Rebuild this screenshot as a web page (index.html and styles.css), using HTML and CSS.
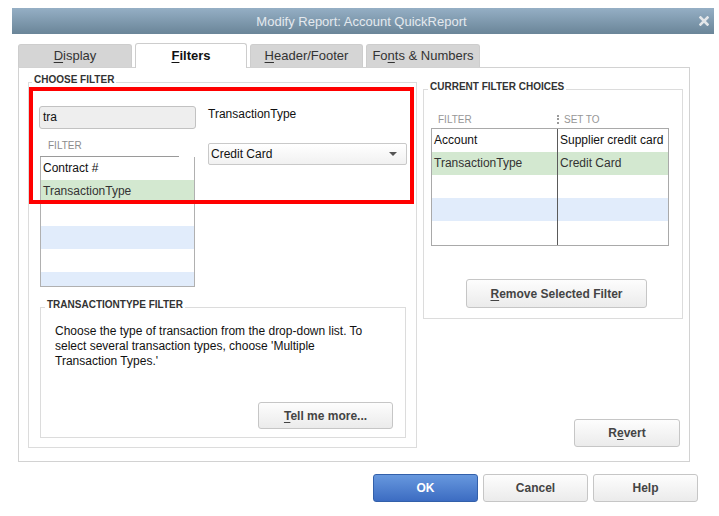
FILE: index.html
```html
<!DOCTYPE html>
<html lang="en">

<head>
  <meta charset="UTF-8" />
  <meta name="viewport" content="width=device-width, initial-scale=1.0" />
  <title>Modify Report: Account QuickReport</title>
  <link rel="stylesheet" href="styles.css">
</head>

<body>
  <div class="titlebar">
    <span class="title">Modify Report: Account QuickReport</span>
    <svg class="close" width="10" height="10" viewBox="0 0 10 10">
      <path d="M1.5 1.5 L8.5 8.5 M8.5 1.5 L1.5 8.5" stroke="#e3e6e9" stroke-width="2.6" stroke-linecap="square" />
    </svg>
  </div>

  <div class="tabs">
    <div class="tab tab-display"><u>D</u>isplay</div>
    <div class="tab tab-filters active"><u>F</u>ilters</div>
    <div class="tab tab-header"><u>H</u>eader/Footer</div>
    <div class="tab tab-fonts">Fo<u>n</u>ts &amp; Numbers</div>
  </div>

  <div class="panel">
    <div class="group choose">
      <div class="group-title">Choose Filter</div>
      <div class="choose-row">
        <div class="choose-left">
          <div class="search">tra</div>
          <div class="list-head">FILTER</div>
          <div class="list">
            <div class="row">Contract #</div>
            <div class="row picked">TransactionType</div>
            <div class="row"></div>
            <div class="row alt"></div>
            <div class="row"></div>
            <div class="row alt"></div>
          </div>
        </div>
        <div class="choose-right">
          <div class="field-label">TransactionType</div>
          <div class="select">
            <span>Credit Card</span>
            <span class="caret"></span>
          </div>
        </div>
      </div>
      <div class="group help-box">
        <div class="group-title">TransactionType Filter</div>
        <p>Choose the type of transaction from the drop-down list. To<br>
          select several transaction types, choose 'Multiple<br>
          Transaction Types.'</p>
        <button class="btn tell"><u>T</u>ell me more...</button>
      </div>
    </div>

    <div class="side">
      <div class="group current">
        <div class="group-title">Current Filter Choices</div>
        <div class="cf-head">
          <div class="cf-head-name">FILTER</div>
          <span class="cf-sep"></span>
          <div class="cf-head-value">SET TO</div>
        </div>
        <div class="cf-table">
          <div class="cf-row">
            <div class="cf-cell name">Account</div>
            <div class="cf-cell">Supplier credit card</div>
          </div>
          <div class="cf-row picked">
            <div class="cf-cell name">TransactionType</div>
            <div class="cf-cell">Credit Card</div>
          </div>
          <div class="cf-row">
            <div class="cf-cell name"></div>
            <div class="cf-cell"></div>
          </div>
          <div class="cf-row alt">
            <div class="cf-cell name"></div>
            <div class="cf-cell"></div>
          </div>
          <div class="cf-row last">
            <div class="cf-cell name"></div>
            <div class="cf-cell"></div>
          </div>
        </div>
        <button class="btn remove"><u>R</u>emove Selected Filter</button>
      </div>
      <button class="btn revert">R<u>e</u>vert</button>
    </div>
  </div>

  <div class="footer">
    <button class="btn primary">OK</button>
    <button class="btn">Cancel</button>
    <button class="btn">Help</button>
  </div>

  <!-- annotation drawn over the dialog -->
  <div class="highlight"></div>
</body>

</html>
```

FILE: styles.css
```css
* {
  box-sizing: border-box;
}

body {
  margin: 0;
  background: #fff;
  font-family: "Liberation Sans", Arial, sans-serif;
  font-size: 12px;
  color: #111;
}

u {
  text-decoration-thickness: 1px;
  text-underline-offset: 2px;
}

/* title bar */
.titlebar {
  margin: 8px 5px 0 12px;
  height: 26px;
  background: linear-gradient(to bottom, #95afc5, #6a8598);
  display: flex;
  align-items: center;
}

.title {
  flex: 1;
  text-align: center;
  padding-left: 12px;
  font-size: 13px;
  color: #e4e9ee;
}

.close {
  margin-right: 5px;
}

/* tabs */
.tabs {
  margin: 9px 0 -1px 18px;
  display: flex;
  align-items: flex-end;
  gap: 3px;
  position: relative;
  z-index: 1;
}

.tab {
  width: 113px;
  height: 23px;
  margin-bottom: 1px;
  background: #d5d5d5;
  border: 1px solid #cdcdcd;
  border-bottom: none;
  border-radius: 3px 3px 0 0;
  text-align: center;
  line-height: 22px;
  font-size: 13px;
  color: #333;
}

.tab-display,
.tab-fonts {
  width: 114px;
}

.tab-filters {
  width: 112px;
}

.tab.active {
  height: 25px;
  margin-bottom: 0;
  background: #fff;
  font-weight: bold;
  color: #111;
  line-height: 24px;
}

/* main panel */
.panel {
  margin-left: 18px;
  width: 672px;
  height: 395px;
  border: 1px solid #d2d2d2;
  padding: 14px 0 0 9px;
  display: flex;
  align-items: flex-start;
  gap: 6px;
}

.group {
  border: 1px solid #dcdcdc;
}

.group-title {
  width: fit-content;
  margin: -9px 0 0 3px;
  padding: 0 2px;
  background: #fff;
  font-size: 10px;
  line-height: 12px;
  font-weight: bold;
  text-transform: uppercase;
  color: #333;
}

.choose {
  width: 389px;
  height: 366px;
  padding-left: 10px;
}

.choose > .group-title {
  margin-left: -7px;
}

.choose-row {
  margin-top: 20px;
  display: flex;
  gap: 12px;
}

.choose-left {
  width: 157px;
}

.search {
  height: 23px;
  border: 1px solid #c2c2c2;
  border-radius: 3px;
  background: #eee;
  padding-left: 3px;
  line-height: 21px;
}

.list-head {
  margin-left: 1px;
  width: 139px;
  height: 28px;
  padding: 0 0 4px 8px;
  border-bottom: 1px solid #9a9a9a;
  display: flex;
  align-items: flex-end;
  font-size: 10px;
  line-height: 12px;
  color: #8c8c8c;
}

.list {
  margin-left: 1px;
  width: 155px;
  height: 130px;
  border: 1px solid #b0b0b0;
  border-top: none;
  overflow: hidden;
}

.row {
  height: 23px;
  line-height: 23px;
  padding-left: 2px;
  white-space: nowrap;
}

.picked {
  background: #d3e8d0;
  color: #333;
}

.alt {
  background: #e1ecfb;
}

.choose-right {
  width: 199px;
}

.field-label {
  margin-top: 1px;
  line-height: 14px;
}

.select {
  margin-top: 22px;
  height: 22px;
  border: 1px solid #c9c9c9;
  border-radius: 2px;
  background: linear-gradient(to bottom, #fff, #f1f1f1);
  padding: 0 9px 0 2px;
  display: flex;
  align-items: center;
  justify-content: space-between;
}

.caret {
  width: 0;
  height: 0;
  border-left: 4px solid transparent;
  border-right: 4px solid transparent;
  border-top: 4px solid #555;
}

.help-box {
  margin: 20px 0 0 1px;
  width: 366px;
  height: 131px;
  display: flex;
  flex-direction: column;
}

.help-box .group-title {
  margin-left: 4px;
}

.help-box p {
  margin: 13px 0 0;
  padding-left: 14px;
  line-height: 15px;
}

/* buttons */
.btn {
  height: 28px;
  border: 1px solid #c6c6c6;
  border-radius: 3px;
  background: linear-gradient(to bottom, #fdfdfd, #ebebeb);
  font-family: "Liberation Sans", Arial, sans-serif;
  font-size: 12px;
  font-weight: bold;
  color: #444;
  padding: 0;
}

.tell {
  margin: auto 12px 8px 0;
  align-self: flex-end;
  width: 135px;
  height: 27px;
}

/* right column */
.side {
  margin-top: 7px;
  display: flex;
  flex-direction: column;
}

.current {
  width: 260px;
  height: 230px;
  padding-left: 7px;
}

.current .group-title {
  margin-left: -3px;
}

.cf-head {
  margin-top: 17px;
  height: 18px;
  display: flex;
  align-items: center;
  font-size: 10px;
  color: #979797;
}

.cf-head-name {
  width: 126px;
  padding-left: 7px;
}

.cf-sep {
  height: 9px;
  border-left: 2px dotted #9a9a9a;
}

.cf-head-value {
  padding-left: 5px;
}

.cf-table {
  width: 238px;
  height: 118px;
  border: 1px solid #a9a9a9;
  display: flex;
  flex-direction: column;
}

.cf-row {
  height: 23px;
  display: flex;
  line-height: 23px;
}

.cf-row.last {
  flex: 1;
}

.cf-cell {
  flex: 1;
  padding-left: 2px;
  white-space: nowrap;
  overflow: hidden;
}

.cf-cell.name {
  flex: none;
  width: 126px;
  border-right: 1px solid #5a5a5a;
}

.remove {
  margin: 33px 0 0 35px;
  width: 181px;
  height: 29px;
}

.revert {
  margin: 100px 3px 0 0;
  align-self: flex-end;
  width: 106px;
}

/* dialog buttons */
.footer {
  margin-top: 12px;
  padding-right: 21px;
  display: flex;
  justify-content: flex-end;
  gap: 5px;
}

.footer .btn {
  width: 105px;
}

.btn.primary {
  background: linear-gradient(to bottom, #6798de, #3c6cc2);
  border-color: #3360aa;
  color: #fff;
}

.highlight {
  position: absolute;
  left: 29px;
  top: 87px;
  width: 385px;
  height: 117px;
  border: 4px solid #f00;
}
```
